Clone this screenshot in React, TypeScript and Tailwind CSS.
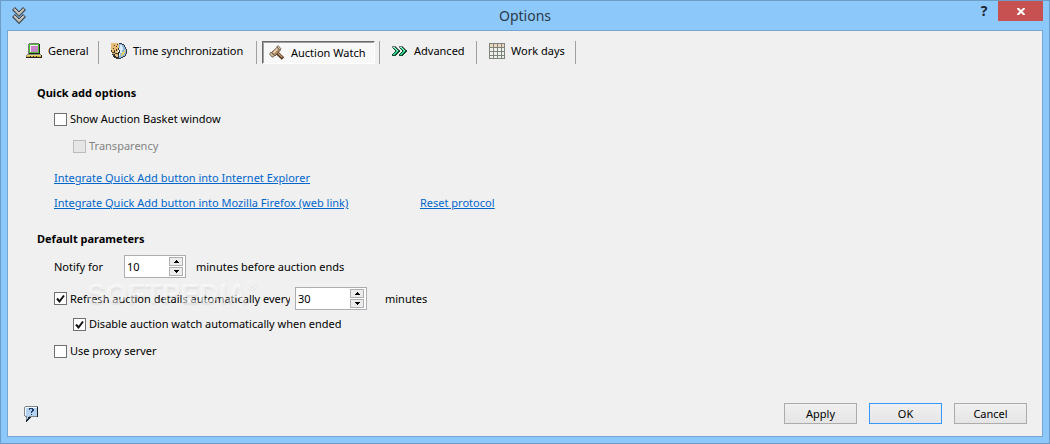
import { useState } from 'react';
import type { ReactNode } from 'react';

const TABS = [
  { id: 'general', label: 'General', icon: <ComputerIcon />, width: 'w-[75px]' },
  { id: 'time', label: 'Time synchronization', icon: <ClockIcon />, width: 'w-[148px]' },
  { id: 'watch', label: 'Auction Watch', icon: <GavelIcon />, width: 'w-[113px]' },
  { id: 'advanced', label: 'Advanced', icon: <ArrowsIcon />, width: 'w-[87px]' },
  { id: 'days', label: 'Work days', icon: <GridIcon />, width: 'w-[89px]' },
];

function AppIcon() {
  return (
    <svg width="14" height="17" viewBox="0 0 14 17">
      {[0, 7].map((y) => (
        <g key={y} transform={`translate(0 ${y})`} fill="none">
          <path d="M1.500 1.500L7 7.200l5.500-5.700" stroke="#343a40" strokeWidth="4" />
          <path d="M2 2l5 5.200L12 2" stroke="#b4b4ae" strokeWidth="2" />
          <path d="M2.500 1.700L7 6.300l4.500-4.600" stroke="#ecece6" strokeWidth=".8" />
        </g>
      ))}
    </svg>
  );
}

function ComputerIcon() {
  return (
    <svg width="16" height="16" viewBox="0 0 16 16" shapeRendering="crispEdges">
      <path d="M3 0h10v1h1v10H2V1h1z" fill="#777" />
      <path d="M13 1h1v10H3v-1h10z" fill="#222" />
      <path d="M3 1h10v9H3z" fill="#4fc234" />
      <path d="M4 2h8v7H4z" fill="#c884c8" />
      <path d="M4 2h8v1H5v6H4z" fill="#f6e7f6" />
      <path d="M1 11h14v1h1v3H0v-3h1z" fill="#8b8b82" />
      <path d="M1 12h14v1H1z" fill="#f0d66c" />
      <path d="M1 13h14v1H1z" fill="#d4b234" />
      <path d="M0 14h16v1H0zM15 12h1v3h-1zM4 13h1v1h-1zM7 13h1v1h-1zM10 13h1v1h-1z" fill="#222" />
    </svg>
  );
}

function ClockIcon() {
  return (
    <svg width="16" height="16" viewBox="0 0 16 16" shapeRendering="crispEdges">
      <path d="M8 0h3v1h2v1h1v2h1v2h1v5h-1v2h-1v1h-2v1h-2v1H5v-1H3v-1H2v-2H1v-2h7z" fill="#343a40" />
      <path d="M8 1h3v1h2v2h1v2h1v5h-1v2h-2v1h-2v1H8v-3h1V7H8z" fill="#8fb6dc" />
      <path d="M9 2h2v2h1v3h-1v3H9v3H8v-3h1V7H8V5h1z" fill="#d9ecfa" />
      <path d="M13 7h1v3h-1v2h-2v1h-1v-2h1V9h2z" fill="#e3d35e" />
      <path d="M0 0h7v1h1v6H7v2H6v2H1V9H0z" fill="#e8bd78" />
      <path d="M0 7h1v2H0zM3 2h1v1H3zM5 3h1v1H5zM6 1h1v1H6zM5 6h1v2H5zM7 5h1v2H7zM3 7h1v2H3zM1 9h3v1H1zM4 10h2v1H4zM2 5h1v1H2z" fill="#47351d" />
      <path d="M4 11h3v3H5v-1H4z" fill="#e8bd78" />
      <path d="M7 9h1v3H7zM4 13h1v1H4z" fill="#222" />
    </svg>
  );
}

function GavelIcon() {
  return (
    <svg width="16" height="16" viewBox="0 0 16 16">
      <path d="M6.500 6.500l7.500 7" stroke="#4a3220" strokeWidth="3.500" />
      <path d="M7 6.500l6.500 6" stroke="#c09368" strokeWidth="1.500" />
      <path d="M8.500 2l3 3-5.500 6-3.500-3.500z" fill="#b08a62" stroke="#54412f" strokeWidth=".8" />
      <path d="M8.500 3.500L4.500 8" stroke="#f0dcc0" strokeWidth="1.500" />
      <path d="M9 .6l3 3.200-1.200 1.200-3-3.200z" fill="#d8c4a8" stroke="#5d4f40" strokeWidth=".8" />
      <path d="M1.800 7.200l3.600 3.400-1 1.400H3L.6 9.200z" fill="#d4bfa2" stroke="#5d4f40" strokeWidth=".8" />
    </svg>
  );
}

function ArrowsIcon() {
  return (
    <svg width="16" height="16" viewBox="0 0 16 16" shapeRendering="crispEdges">
      {[0, 7].map((x) => (
        <g key={x} transform={`translate(${x} 3)`}>
          <path d="M0 0h4v1h1v1h1v1h1v1h1v2h-1v1h-1v1h-1v1h-1v1H0V8h1V7h1V6h1V4H2V3H1V2H0z" fill="#174a35" />
          <path d="M0 0h4v1h1v1h1v1h1v1h-1V3H5V2H4V1H1v1H0z" fill="#777" />
          <path d="M1 1h2v1h1v1h1v1h1v2H5v1H4v1H3v1H1V8h1V7h1V6h1V4H3V3H2V2H1z" fill="#31d88b" />
          <path d="M1 1h2v1h1v1h1v1h1v1H5V4H4V3H3V2H1z" fill="#a1f5cd" />
        </g>
      ))}
    </svg>
  );
}

function GridIcon() {
  return (
    <svg width="16" height="16" viewBox="0 0 16 16" shapeRendering="crispEdges">
      <path d="M0 0h16v16H0z" fill="#80827e" />
      {[1, 5, 9, 13].map((y) =>
        [1, 5, 9, 13].map((x) => (
          <rect key={`${x}-${y}`} x={x} y={y} width={x === 13 ? 2 : 3} height={y === 13 ? 2 : 3} fill={y === 1 ? '#ead9bd' : '#eef2ec'} />
        ))
      )}
    </svg>
  );
}

function HelpIcon() {
  return (
    <svg width="15" height="16" viewBox="0 0 15 16" shapeRendering="crispEdges">
      <path d="M1 0h13v11H7v1H6v1H5v1H4v1H2v-4H1v-1H0V1h1z" fill="#7d858c" />
      <path d="M13 1h1v10H7v1H6v1H5v1H4v1H3v1H2v-2h1v-3h10z" fill="#14212e" />
      <path d="M1 1h12v9H5v1H4v2H3v-3H1z" fill="#b4d2f0" />
      <path d="M1 1h12v1H2v7H1z" fill="#f4faff" />
      <path d="M5 2h4v1h1v2H9v1H8v1H7V5h1V3H6v1H5zM7 8h1v1H7z" fill="#1b3d6b" />
    </svg>
  );
}

function Check({ label, defaultChecked, disabled, className = '' }: { label: string; defaultChecked?: boolean; disabled?: boolean; className?: string }) {
  return (
    <label className={`flex items-center gap-[3px] overflow-hidden whitespace-nowrap ${disabled ? 'text-[#838383]' : ''} ${className}`}>
      <span className="relative flex shrink-0">
        <input
          type="checkbox"
          defaultChecked={defaultChecked}
          disabled={disabled}
          className="peer size-[13px] appearance-none border border-[#707070] bg-white disabled:border-[#bcbcbc] disabled:bg-[#e6e6e6]"
        />
        <svg className="pointer-events-none absolute inset-0 hidden peer-checked:block" width="13" height="13" viewBox="0 0 13 13">
          <path d="M3 6.500l2.500 3L10 3.500" fill="none" stroke="#111" strokeWidth="2" />
        </svg>
      </span>
      {label}
    </label>
  );
}

function Spinner({ initial, label, className }: { initial: number; label: string; className: string }) {
  const [value, setValue] = useState(initial);

  return (
    <div className={`flex h-[23px] shrink-0 border border-[#abadb3] bg-white p-px ${className}`}>
      <input
        aria-label={label}
        value={value}
        onChange={(e) => setValue(Number(e.target.value.replace(/\D/g, '')))}
        className="min-w-0 flex-1 pl-px text-[11px] outline-none"
      />
      <div className="flex w-[15px] flex-col gap-px pr-px">
        <SpinButton label="Increase" onClick={() => setValue(value + 1)}>
          <path d="M0 3h5v-1h-1v-1h-1v-1h-1v1h-1v1h-1z" />
        </SpinButton>
        <SpinButton label="Decrease" onClick={() => setValue(Math.max(0, value - 1))}>
          <path d="M0 0h5v1h-1v1h-1v1h-1v-1h-1v-1h-1z" />
        </SpinButton>
      </div>
    </div>
  );
}

function SpinButton({ label, onClick, children }: { label: string; onClick: () => void; children: ReactNode }) {
  return (
    <button type="button" aria-label={label} onClick={onClick} className="flex flex-1 items-center justify-center border border-[#b0b0b0] bg-[#ececec]">
      <svg width="5" height="3" viewBox="0 0 5 3" shapeRendering="crispEdges">{children}</svg>
    </button>
  );
}

export default function App() {
  const [tab, setTab] = useState('watch');

  return (
    <div className="flex min-h-screen flex-col border border-[#6c9cc8] bg-[#8dc8fb] px-[6px] pb-[6px] font-['Noto_Sans','Open_Sans',sans-serif] text-[11px] leading-[18px] text-black">
      {/* title bar */}
      <header className="grid h-[29px] grid-cols-[1fr_auto_1fr] items-start">
        <div className="pt-[6px] pl-[5px]">
          <AppIcon />
        </div>
        <h1 className="pt-[5px] text-[14px] leading-[20px] text-[#2b3a47]">Options</h1>
        <div className="flex justify-end">
          <button type="button" aria-label="Help" className="w-[28px] text-[14px] leading-[20px] font-bold text-[#1d262e]">?</button>
          <button type="button" aria-label="Close" className="flex h-5 w-[45px] items-center justify-center bg-[#c75050]">
            <svg width="8" height="7" viewBox="0 0 8 7">
              <path d="M.5 0l7 7M7.500 0l-7 7" stroke="#fff" strokeWidth="2" />
            </svg>
          </button>
        </div>
      </header>

      <main className="flex flex-1 flex-col border border-[#76a6d6] bg-[#f0f0f0]">
        {/* tabs */}
        <nav className="flex gap-[5px] pt-[10px] pl-[11px]">
          {TABS.map((t) => (
            <div key={t.id} className="flex border-r border-[#a0a0a0] pr-[4px]">
              <button
                type="button"
                onClick={() => setTab(t.id)}
                className={`flex h-[23px] items-center gap-[6px] border pl-[6px] whitespace-nowrap ${t.width} ${tab === t.id ? 'border-t-[#696969] border-r-white border-b-white border-l-[#696969] bg-[#f8f8f8] pt-px shadow-[inset_1px_1px_0_#a0a0a0]' : 'border-transparent pb-1'}`}
              >
                {t.icon}
                {t.label}
              </button>
            </div>
          ))}
        </nav>

        <section className="relative flex-1 pt-[20px] pl-[29px]">
          <h2 className="font-bold">Quick add options</h2>
          <div className="pl-[17px]">
            <Check label="Show Auction Basket window" className="mt-2" />
            <Check label="Transparency" disabled className="mt-[9px] ml-[19px]" />
            <div className="mt-[14px] grid grid-cols-[366px_1fr] gap-y-[7px] text-[#0066cc] underline">
              <a href="#ie" className="col-span-2 justify-self-start">Integrate Quick Add button into Internet Explorer</a>
              <a href="#firefox" className="justify-self-start">Integrate Quick Add button into Mozilla Firefox (web link)</a>
              <a href="#reset" className="justify-self-start">Reset protocol</a>
            </div>
          </div>

          <h2 className="mt-[18px] font-bold">Default parameters</h2>
          <div className="pl-[17px]">
            <div className="mt-[7px] flex items-center">
              <span className="w-[70px]">Notify for</span>
              <Spinner initial={10} label="Notify for minutes" className="w-[62px]" />
              <span className="pl-[10px]">minutes before auction ends</span>
            </div>
            <div className="mt-[9px] flex items-center">
              <Check label="Refresh auction details automatically every" defaultChecked className="mr-[5px] w-[236px]" />
              <Spinner initial={30} label="Refresh interval" className="w-[72px]" />
              <span className="pl-[18px]">minutes</span>
            </div>
            <Check label="Disable auction watch automatically when ended" defaultChecked className="mt-[5px] ml-[19px]" />
            <Check label="Use proxy server" className="mt-[9px]" />
          </div>

          <div className="pointer-events-none absolute top-[214px] left-[79px] flex font-['Liberation_Sans',sans-serif] text-[28px] leading-[32px] font-bold text-white/50 [text-shadow:1px_2px_2px_rgb(0_0_0/0.06)]">
            SOFTPEDIA
            <span className="text-[12px] leading-[14px]">®</span>
          </div>
        </section>

        <footer className="flex items-center gap-3 pr-[15px] pb-3 pl-[16px]">
          <button type="button" aria-label="Context help" className="mr-auto">
            <HelpIcon />
          </button>
          <button type="button" className="h-[21px] w-[73px] border border-[#acacac] bg-linear-to-b from-[#f0f0f0] to-[#e5e5e5]">Apply</button>
          <button type="button" className="h-[21px] w-[73px] border border-[#3399ff] bg-linear-to-b from-[#f0f0f0] to-[#e5e5e5]">OK</button>
          <button type="button" className="h-[21px] w-[73px] border border-[#acacac] bg-linear-to-b from-[#f0f0f0] to-[#e5e5e5]">Cancel</button>
        </footer>
      </main>
    </div>
  );
}
